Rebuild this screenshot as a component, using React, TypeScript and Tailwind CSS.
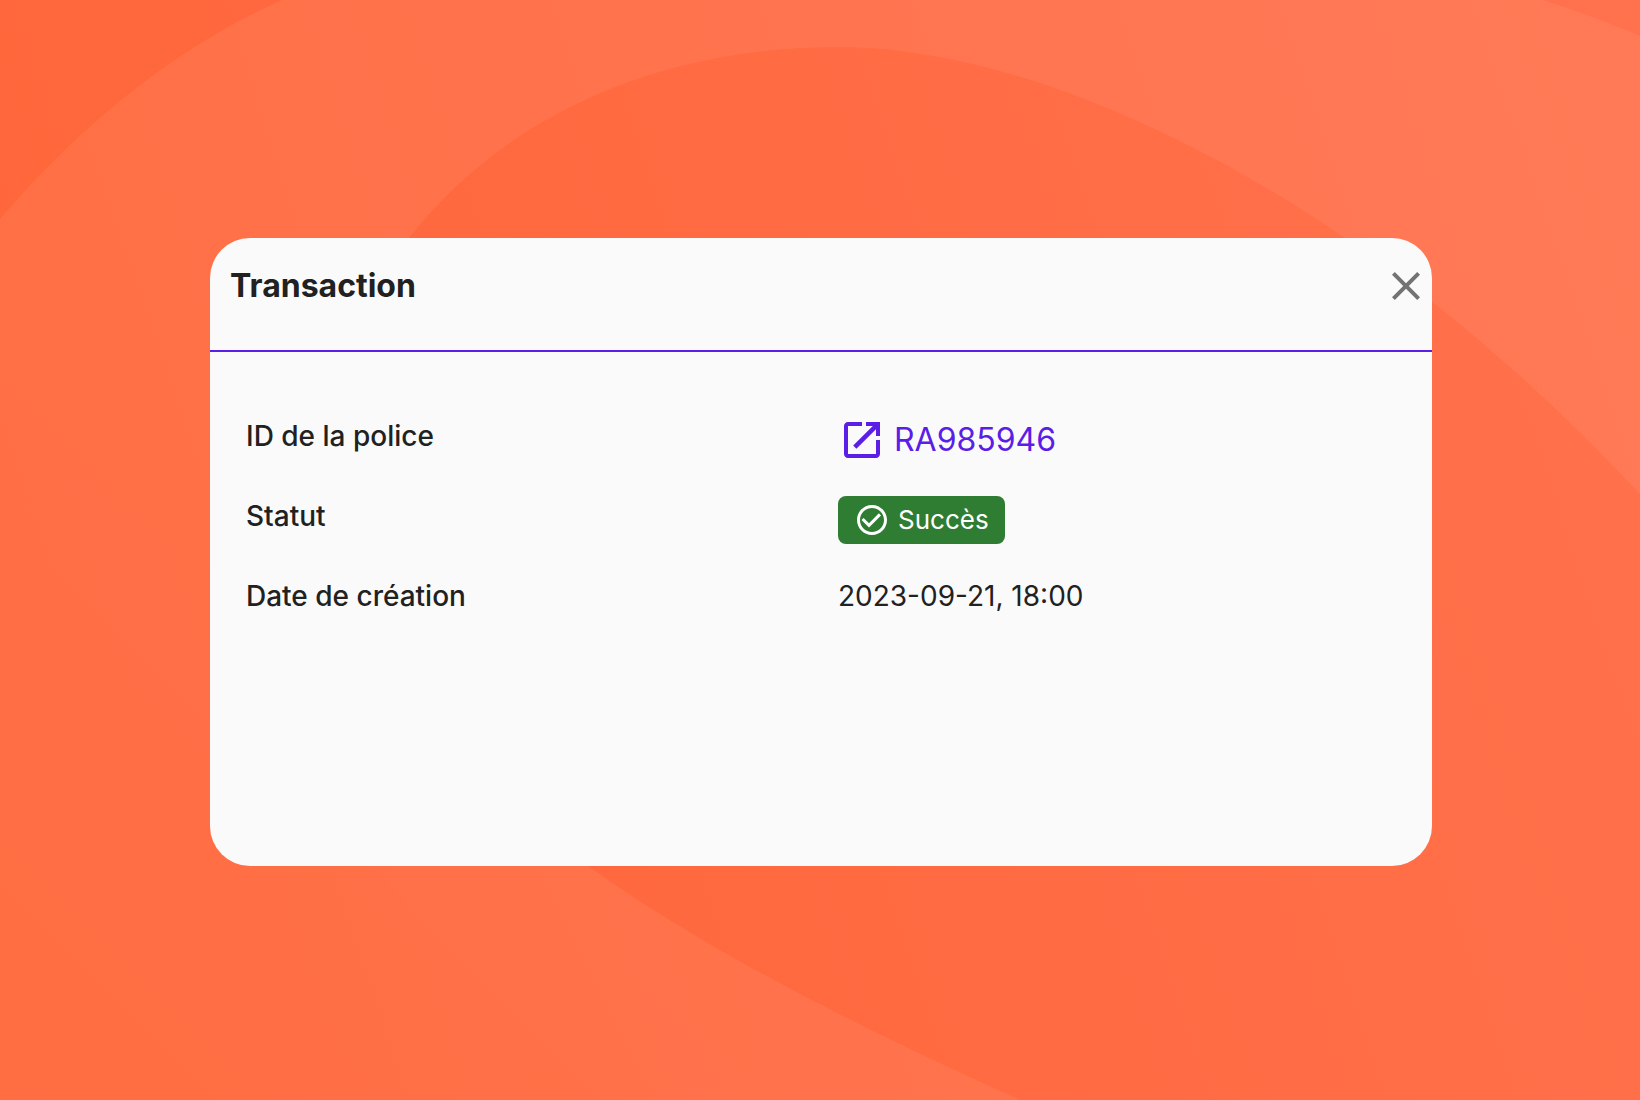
import React from "react";

function Backdrop() {
  return (
    <svg
      className="absolute inset-0 h-full w-full"
      viewBox="0 0 1640 1100"
      preserveAspectRatio="xMidYMid slice"
      aria-hidden="true"
    >
      <defs>
        <linearGradient id="base" gradientUnits="userSpaceOnUse" x1="0" y1="550" x2="1640" y2="0">
          <stop offset="0" stopColor="#ff663a" />
          <stop offset="0.5" stopColor="#ff6b43" />
          <stop offset="1" stopColor="#ff724d" />
        </linearGradient>
        <linearGradient id="band" gradientUnits="userSpaceOnUse" x1="0" y1="1100" x2="400" y2="700">
          <stop offset="0" stopColor="#fff" stopOpacity="0.045" />
          <stop offset="1" stopColor="#fff" stopOpacity="0.06" />
        </linearGradient>
      </defs>
      <rect width="1640" height="1100" fill="url(#base)" />
      <path
        fill="url(#band)"
        d="M0 219C90 115 182 45 282 0H1543C1577 11 1610 23 1640 36V494C1550 398 1455 313 1345 238C1190 132 1000 47 838 47C660 47 505 115 409 238C300 400 330 650 588 866C705 950 860 1028 1020 1100H0Z"
      />
    </svg>
  );
}

function CloseIcon() {
  return (
    <svg className="h-12 w-12" viewBox="0 0 24 24" fill="#737373" aria-hidden="true">
      <path d="M19 6.41 17.59 5 12 10.59 6.41 5 5 6.41 10.59 12 5 17.59 6.41 19 12 13.41 17.59 19 19 17.59 13.41 12z" />
    </svg>
  );
}

function OpenInNewIcon() {
  return (
    <svg className="h-12 w-12 shrink-0" viewBox="0 0 24 24" fill="currentColor" aria-hidden="true">
      <path d="M19 19H5V5h7V3H5c-1.11 0-2 .9-2 2v14c0 1.1.89 2 2 2h14c1.1 0 2-.9 2-2v-7h-2v7zM14 3v2h3.4l-9.8 9.8 1.6 1.6L19 6.6V10h2V3h-7z" />
    </svg>
  );
}

function CheckCircleIcon() {
  return (
    <svg className="h-9 w-9 shrink-0" viewBox="0 0 24 24" fill="currentColor" aria-hidden="true">
      <path d="M16.59 7.58 10 14.17l-3.59-3.58L5 12l5 5 8-8zM12 2C6.48 2 2 6.48 2 12s4.48 10 10 10 10-4.48 10-10S17.52 2 12 2m0 18c-4.42 0-8-3.58-8-8s3.58-8 8-8 8 3.58 8 8-3.58 8-8 8" />
    </svg>
  );
}

function Row({ label, children }: { label: string; children: React.ReactNode }) {
  return (
    <div className="grid min-h-12 grid-cols-2 gap-x-[34px]">
      <dt className="text-[28px] leading-[40px] font-medium">{label}</dt>
      <dd className="flex items-start text-[28px] leading-[40px]">{children}</dd>
    </div>
  );
}

export default function App() {
  return (
    <main className="relative flex min-h-screen flex-col items-center overflow-hidden bg-[#ff6b43] pt-[238px] pr-10 pb-10 pl-[42px] font-['Inter',sans-serif] text-[#212121]">
      <Backdrop />
      <section
        role="dialog"
        aria-labelledby="dialog-title"
        className="relative min-h-[628px] w-full max-w-[1222px] rounded-[40px] bg-[#fafafa]"
      >
        <header className="flex items-start justify-between border-b-2 border-[#5b1ee6] pt-6 pb-10 pl-5">
          <h1 id="dialog-title" className="text-[32px] leading-[48px] font-bold">
            Transaction
          </h1>
          <button type="button" aria-label="Fermer" className="mr-0.5">
            <CloseIcon />
          </button>
        </header>
        <dl className="flex flex-col gap-8 px-9 pt-16">
          <Row label="ID de la police">
            <a href="#police" className="flex items-center gap-2 text-[32px] leading-[48px] text-[#5b1ee6]">
              <OpenInNewIcon />
              RA985946
            </a>
          </Row>
          <Row label="Statut">
            <span className="flex h-12 items-center gap-2 rounded-lg bg-[#2e7d32] px-4 text-[26px] text-white">
              <CheckCircleIcon />
              Succès
            </span>
          </Row>
          <Row label="Date de création">2023-09-21, 18:00</Row>
        </dl>
      </section>
    </main>
  );
}
